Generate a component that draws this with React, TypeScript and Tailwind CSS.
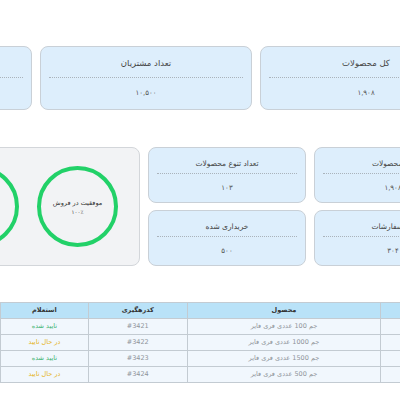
import React from 'react'

interface stat {
  title: string
  value: string
}

const topStats: stat[] = [
  { title: 'کل محصولات', value: '۱,۹۰۸' },
  { title: 'تعداد مشتریان', value: '۱۰,۵۰۰' },
  { title: 'سفارشات', value: '۳۰۴' },
]

const gridStats: stat[] = [
  { title: 'کل محصولات', value: '۱,۹۰۸' },
  { title: 'تعداد تنوع محصولات', value: '۱۰۳' },
  { title: 'کل سفارشات', value: '۳۰۴' },
  { title: 'خریداری شده', value: '۵۰۰' },
]

const orders = [
  { id: '۱', product: 'جم 100 عددی فری فایر', code: '#3421', done: true },
  { id: '۲', product: 'جم 1000 عددی فری فایر', code: '#3422', done: false },
  { id: '۳', product: 'جم 1500 عددی فری فایر', code: '#3423', done: true },
  { id: '۴', product: 'جم 500 عددی فری فایر', code: '#3424', done: false },
]

function StatCard({ title, value, small }: stat & { small?: boolean }) {
  return (
    <div
      className={
        small
          ? 'flex h-[56px] w-[158px] flex-col rounded-[8px] border border-[#c9d0d7] bg-[#ddeefc]'
          : 'flex h-[64px] w-[212px] shrink-0 flex-col rounded-[8px] border border-[#c9d0d7] bg-[#ddeefc]'
      }
    >
      <div
        className={
          small
            ? 'flex h-[25px] items-end justify-center pb-[4px] text-[7.5px] text-[#444]'
            : 'flex h-[30px] items-end justify-center pb-[7px] text-[8.5px] text-[#444]'
        }
      >
        {title}
      </div>
      <div className="mx-2 border-t border-dotted border-[#aab3bb]" />
      <div className="flex flex-1 items-center justify-center text-[7px] text-[#555]">{value}</div>
    </div>
  )
}

function Ring({ label, value }: { label?: string; value?: string }) {
  return (
    <div className="flex h-[81px] w-[81px] shrink-0 flex-col items-center justify-center rounded-full border-[4px] border-[#22d168]">
      {label && <span className="text-[6.5px] leading-[10px] text-[#333]">{label}</span>}
      {value && <span className="text-[5.5px] leading-[8px] text-[#444]">{value}</span>}
    </div>
  )
}

export default function App() {
  return (
    <div className="h-[400px] w-[400px] overflow-hidden bg-white">
      <div
        dir="rtl"
        className="ml-[-190px] w-[670px] pr-[8px] pt-[46px] font-['DejaVu_Sans',sans-serif]"
      >
        {/* summary cards */}
        <div className="flex gap-2">
          {topStats.map((s, i) => (
            <StatCard key={i} title={s.title} value={s.value} />
          ))}
        </div>

        <div className="mt-[37px] flex h-[119px] gap-2">
          <div className="grid w-[324px] shrink-0 grid-cols-2 gap-x-2 gap-y-[7px]">
            {gridStats.map((s, i) => (
              <StatCard key={i} title={s.title} value={s.value} small />
            ))}
          </div>
          <div className="flex w-[320px] items-center gap-[18px] rounded-[8px] border border-[#d3d6da] bg-[#f2f3f5] pr-[21px]">
            <Ring label="موفقیت در فروش" value="۱۰۰٪" />
            <Ring />
          </div>
        </div>

        {/* latest orders */}
        <table className="mt-[36px] w-[472px] border-collapse text-[6.5px]">
          <thead>
            <tr className="h-[16px] bg-[#b9e2f8] text-[#333]">
              <th className="w-[91px] border border-[#c3cbd2] font-bold">ردیف</th>
              <th className="w-[194px] border border-[#c3cbd2] font-bold">محصول</th>
              <th className="w-[99px] border border-[#c3cbd2] font-bold">کدرهگیری</th>
              <th className="w-[88px] border border-[#c3cbd2] font-bold">استعلام</th>
            </tr>
          </thead>
          <tbody>
            {orders.map((o) => (
              <tr key={o.code} className="h-[16px] bg-[#f1f7fd] text-center text-[#8f949a]">
                <td className="border border-[#c3cbd2]">{o.id}</td>
                <td className="border border-[#c3cbd2]">{o.product}</td>
                <td className="border border-[#c3cbd2]">{o.code}</td>
                <td
                  className={
                    o.done
                      ? 'border border-[#c3cbd2] text-[#3cb371]'
                      : 'border border-[#c3cbd2] text-[#e5b422]'
                  }
                >
                  {o.done ? 'تایید شده' : 'در حال تایید'}
                </td>
              </tr>
            ))}
          </tbody>
        </table>
      </div>
    </div>
  )
}
